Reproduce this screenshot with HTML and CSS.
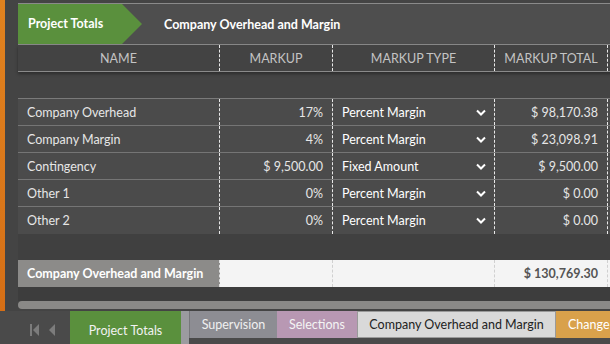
FILE: index.html
```html
<!DOCTYPE html>
<html lang="en">
<head>
    <meta charset="UTF-8">
    <title>Company Overhead and Margin</title>
    <link rel="stylesheet" href="styles.css">
</head>
<body>

<div class="app">
    <div class="side"></div>
    <div class="main">
        <div class="crumbs">
            <div class="crumb-home">Project Totals</div>
            <div class="crumb-title">Company Overhead and Margin</div>
        </div>

        <div class="grid">
            <div class="head">
                <div class="cell">NAME</div>
                <div class="cell">MARKUP</div>
                <div class="cell">MARKUP TYPE</div>
                <div class="cell">MARKUP TOTAL</div>
                <div class="cell extra"></div>
            </div>
            <div class="spacer"></div>
            <div class="body" id="rows">
                <!-- rows -->
            </div>
            <div class="gap"></div>
            <div class="total">
                <div class="cell label">Company Overhead and Margin</div>
                <div class="cell"></div>
                <div class="cell"></div>
                <div class="cell num">$ 130,769.30</div>
                <div class="cell extra"></div>
            </div>
        </div>

        <div class="after"></div>
        <div class="scrollbar"></div>

        <div class="tabs">
            <div class="nav">
                <svg width="9" height="12" viewBox="0 0 9 12"><rect x="0" y="0" width="2" height="12" fill="#7c7c7c"/><path d="M9 0 L3 6 L9 12 Z" fill="#7c7c7c"/></svg>
                <svg width="7" height="12" viewBox="0 0 7 12"><path d="M7 0 L1 6 L7 12 Z" fill="#7c7c7c"/></svg>
            </div>
            <div class="tab green">Project Totals</div>
            <div class="tab grey">Supervision</div>
            <div class="tab pink">Selections</div>
            <div class="tab light">Company Overhead and Margin</div>
            <div class="tab orange">Change</div>
        </div>
    </div>
</div>

<script>
    const rows = [
        { name: "Company Overhead", markup: "17%", type: "Percent Margin", total: "$ 98,170.38" },
        { name: "Company Margin", markup: "4%", type: "Percent Margin", total: "$ 23,098.91" },
        { name: "Contingency", markup: "$ 9,500.00", type: "Fixed Amount", total: "$ 9,500.00" },
        { name: "Other 1", markup: "0%", type: "Percent Margin", total: "$ 0.00" },
        { name: "Other 2", markup: "0%", type: "Percent Margin", total: "$ 0.00" }
    ];

    const chevron = '<svg width="10" height="7" viewBox="0 0 10 7"><path d="M1 1.5 L5 5.5 L9 1.5" fill="none" stroke="#fff" stroke-width="2"/></svg>';

    const body = document.getElementById('rows');
    rows.forEach(row => {
        const div = document.createElement('div');
        div.className = 'row';
        div.innerHTML = `
            <div class="cell">${row.name}</div>
            <div class="cell num">${row.markup}</div>
            <div class="cell select"><span>${row.type}</span>${chevron}</div>
            <div class="cell num">${row.total}</div>
            <div class="cell extra"></div>
        `;
        body.appendChild(div);
    });
</script>

</body>
</html>
```

FILE: styles.css
```css
body {
    margin: 0;
    padding: 0;
    background-color: #444;
    font-family: Lato, "Open Sans", sans-serif;
    font-size: 12.5px;
    color: #e6e6e6;
    overflow: hidden;
}
.app {
    display: flex;
    height: 344px;
}
.side {
    width: 5px;
    flex-shrink: 0;
    background: linear-gradient(180deg, #e0821f 0%, #d9761a 60%, #d46c14 100%);
}
.main {
    width: 600px;
    flex-shrink: 0;
    margin-left: 13px;
    display: flex;
    flex-direction: column;
}
.crumbs {
    margin-top: 3px;
    height: 40px;
    border-top: 1px solid #8a8a8a;
    border-bottom: 1px solid #8a8a8a;
    background-color: #4e4e4e;
    display: flex;
    align-items: center;
    font-weight: bold;
    color: #fff;
}
.crumb-home {
    width: 114px;
    height: 40px;
    padding-left: 10px;
    line-height: 40px;
    background-color: #5a903d;
    clip-path: polygon(0 0, 104px 0, 100% 50%, 104px 100%, 0 100%);
}
.crumb-title {
    margin-left: 22px;
}
.grid {
    display: flex;
    flex-direction: column;
}
.head, .row, .total {
    display: grid;
    grid-template-columns: 202px 113px 162px 113px 10px;
    box-sizing: border-box;
}
.cell {
    box-sizing: border-box;
    border-right: 1px dashed #e8e8e8;
    padding: 0 9px;
    display: flex;
    align-items: center;
    white-space: nowrap;
    overflow: hidden;
}
.cell.extra {
    border-right: none;
}
.head {
    height: 27px;
    background-color: #434343;
    border-bottom: 1px solid #8a8a8a;
    box-shadow: 0 2px 3px rgba(0, 0, 0, 0.35);
    color: #c4c4c4;
    position: relative;
}
.head .cell {
    justify-content: center;
}
.spacer {
    height: 26px;
    background-color: #444;
    border-bottom: 1px solid #7a7a7a;
}
.row {
    height: 27px;
    background-color: #4b4b4b;
    border-bottom: 1px solid #757575;
}
.row:last-child {
    border-bottom: none;
}
.num {
    justify-content: flex-end;
}
.select {
    justify-content: space-between;
    color: #fff;
    padding-right: 8px;
}
.gap {
    height: 26px;
    background-color: #404040;
}
.total {
    height: 27px;
    background-color: #f4f4f4;
    color: #555;
    font-weight: bold;
}
.total .cell {
    border-right-color: #d0d0d0;
}
.total .label {
    background-color: #8c8b89;
    color: #fff;
    border-right-color: #e0e0e0;
}
.after {
    height: 14px;
    background-color: #3d3d3d;
}
.scrollbar {
    height: 8px;
    background-color: #8a8987;
    border-radius: 4px 0 0 4px;
}
.tabs {
    margin-top: 2px;
    flex: 1;
    background-color: #4a4a4a;
    display: flex;
    align-items: flex-start;
    margin-left: -18px;
}
.nav {
    width: 70px;
    height: 33px;
    display: flex;
    align-items: center;
    padding: 5px 0 0 30px;
    box-sizing: border-box;
    gap: 9px;
}
.tab {
    box-sizing: border-box;
    height: 27px;
    display: flex;
    align-items: center;
    justify-content: center;
    white-space: nowrap;
}
.tab.green {
    width: 119px;
    height: 33px;
    padding-top: 5px;
    background-color: #5a903d;
    color: #f2f2f2;
    border-right: 8px solid #9b9b9f;
}
.tab.grey {
    width: 88px;
    background-color: #8d8d93;
    color: #f0f0f0;
    border-left: 1px solid #77777b;
}
.tab.pink {
    width: 80px;
    background-color: #b898b3;
    color: #f4f4f4;
}
.tab.light {
    width: 199px;
    background-color: #d9d9d9;
    color: #222;
    border: 1px solid #9a9a9a;
}
.tab.orange {
    width: 60px;
    background-color: #d9a14b;
    color: #fff;
    justify-content: flex-start;
    padding-left: 12px;
}
```
